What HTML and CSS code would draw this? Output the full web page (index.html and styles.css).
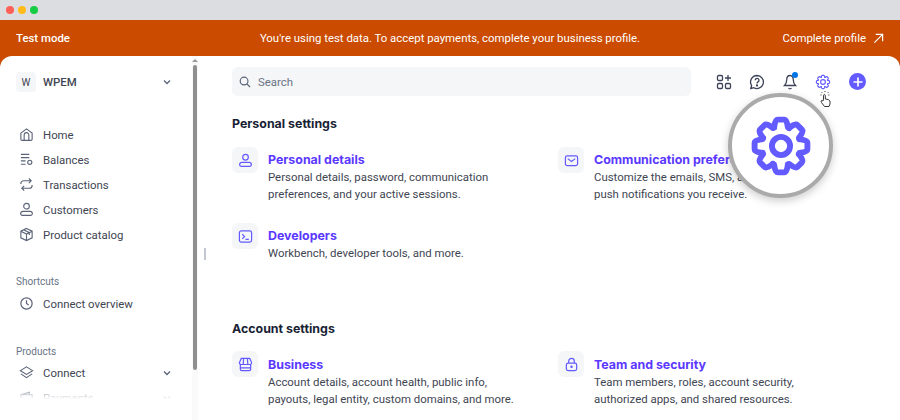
FILE: index.html
```html
<!DOCTYPE html>
<html>
<head>
<title>Settings - WPEM</title>
<link rel="stylesheet" href="styles.css">
</head>
<body>
<div class="chrome">
	<span class="dot red"></span><span class="dot yellow"></span><span class="dot green"></span>
</div>
<div class="banner">
	<b class="mode">Test mode</b>
	<span class="notice">You're using test data. To accept payments, complete your business profile.</span>
	<span class="complete">Complete profile
		<svg width="11" height="11" viewBox="0 0 12 12" fill="none" stroke="#fff" stroke-width="1.300"><path d="M1.500 10.500 10.500 1.500M3 1.500h7.500V9"/></svg>
	</span>
</div>
<div class="panel">
	<div class="sidebar">
		<div class="account">
			<span class="badge">W</span>
			<b class="account-name">WPEM</b>
			<svg class="chev" width="10" height="10" viewBox="0 0 10 10" fill="none" stroke="#5b6478" stroke-width="1.300"><path d="M2 3.500 5 6.500 8 3.500"/></svg>
		</div>
		<div class="nav">
			<div class="nav-item">
				<svg width="15" height="15" viewBox="0 0 16 16" fill="none" stroke="#5b6478" stroke-width="1.200"><path d="M2 6.500 8 2l6 4.500V13a1.300 1.300 0 0 1-1.300 1.300H3.300A1.300 1.300 0 0 1 2 13z"/><path d="M5.500 14V8.500a2.500 2.500 0 0 1 5 0V14"/></svg>
				Home</div>
			<div class="nav-item">
				<svg width="15" height="15" viewBox="0 0 16 16" fill="none" stroke="#5b6478" stroke-width="1.200"><path d="M2 2.500h9M2 6h9M2 9.500h5M2 13h5"/><circle cx="11.500" cy="11" r="2.200"/></svg>
				Balances</div>
			<div class="nav-item">
				<svg width="15" height="15" viewBox="0 0 16 16" fill="none" stroke="#5b6478" stroke-width="1.200"><path d="M10.500 1.500 13 4l-2.500 2.500M13 4H5a3 3 0 0 0-3 3v.500M5.500 14.500 3 12l2.500-2.500M3 12h8a3 3 0 0 0 3-3v-.500"/></svg>
				Transactions</div>
			<div class="nav-item">
				<svg width="15" height="15" viewBox="0 0 16 16" fill="none" stroke="#5b6478" stroke-width="1.200"><circle cx="8" cy="4.500" r="3"/><path d="M4 10h8a2.200 2.200 0 0 1 2.200 2.200v.300a1.800 1.800 0 0 1-1.800 1.800H3.600a1.800 1.800 0 0 1-1.800-1.800v-.300A2.200 2.200 0 0 1 4 10z"/></svg>
				Customers</div>
			<div class="nav-item">
				<svg width="15" height="15" viewBox="0 0 16 16" fill="none" stroke="#5b6478" stroke-width="1.200"><path d="M8 1.500 14 4.500v7l-6 3-6-3v-7zM2 4.500l6 3 6-3M8 7.500v7M5 3l6 3v2.500"/></svg>
				Product catalog</div>
		</div>
		<div class="nav-title shortcuts">Shortcuts</div>
		<div class="nav-item">
			<svg width="15" height="15" viewBox="0 0 16 16" fill="none" stroke="#5b6478" stroke-width="1.300"><circle cx="8" cy="8" r="6"/><path d="M8 4.500V8l2.300 1.500"/></svg>
			Connect overview</div>
		<div class="nav-title products">Products</div>
		<div class="nav-item">
			<svg width="15" height="15" viewBox="0 0 16 16" fill="none" stroke="#5b6478" stroke-width="1.200"><path d="M8 2 14.500 6 8 10 1.500 6z"/><path d="M2 9.500 8 13.500l6-4"/></svg>
			Connect
			<svg class="chev" width="10" height="10" viewBox="0 0 10 10" fill="none" stroke="#5b6478" stroke-width="1.300"><path d="M2 3.500 5 6.500 8 3.500"/></svg>
		</div>
		<div class="nav-item">
			<svg width="15" height="15" viewBox="0 0 16 16" fill="none" stroke="#5b6478" stroke-width="1.200"><path d="M2 5 11 2.500V5M2 5h12v8H2z"/></svg>
			Payments
			<svg class="chev" width="10" height="10" viewBox="0 0 10 10" fill="none" stroke="#5b6478" stroke-width="1.300"><path d="M2 3.500 5 6.500 8 3.500"/></svg>
		</div>
		<div class="fade"></div>
		<div class="scroll"><span class="scroll-up"></span><span class="thumb"></span></div>
	</div>
	<span class="handle"></span>
	<div class="main">
		<div class="topbar">
			<div class="search">
				<svg width="12" height="12" viewBox="0 0 13 13" fill="none" stroke="#5b6478" stroke-width="1.300"><circle cx="5.500" cy="5.500" r="4.200"/><path d="M8.700 8.700 12 12"/></svg>
				Search
			</div>
			<div class="tools">
				<svg width="16" height="16" viewBox="0 0 16 16" fill="none" stroke="#3c4257" stroke-width="1.300"><rect x="1.500" y="1.500" width="5" height="5" rx="1.200"/><rect x="1.500" y="9.500" width="5" height="5" rx="1.200"/><rect x="9.500" y="9.500" width="5" height="5" rx="1.200"/><path d="M12 1v6M9 4h6"/></svg>
				<svg width="16" height="16" viewBox="0 0 16 16" fill="none" stroke="#3c4257" stroke-width="1.300"><path d="M8 1.500a6.500 6.500 0 1 1-3.200 12.200L1.800 14.500l.8-3A6.500 6.500 0 0 1 8 1.500z"/><path d="M6.200 6.200a1.900 1.900 0 1 1 2.800 1.700c-.7.400-1 .8-1 1.500"/><circle cx="8" cy="11.500" r=".5"/></svg>
				<span class="bell">
					<svg width="16" height="16" viewBox="0 0 16 16" fill="none" stroke="#3c4257" stroke-width="1.300"><path d="M8 1.500c-2.200 0-3.300 2-3.300 4.500 0 3-1.200 4.500-2.200 5.500h11c-1-1-2.200-2.500-2.200-5.500 0-2.500-1.100-4.500-3.300-4.500zM6.500 14a1.800 1.800 0 0 0 3 0"/></svg>
					<span class="bell-dot"></span>
				</span>
				<svg width="16" height="16" viewBox="-12 -12 24 24" fill="none" stroke="#635bff" stroke-width="1.700" stroke-linejoin="round" stroke-linecap="round">
					<defs><path id="tooth" d="M-2.600-6.900C-2.400-8-2.300-9.900-1.200-9.900H1.200C2.300-9.900 2.400-8 2.600-6.900L3.050-6.710"/></defs>
					<use href="#tooth"/><use href="#tooth" transform="rotate(45)"/><use href="#tooth" transform="rotate(90)"/><use href="#tooth" transform="rotate(135)"/><use href="#tooth" transform="rotate(180)"/><use href="#tooth" transform="rotate(225)"/><use href="#tooth" transform="rotate(270)"/><use href="#tooth" transform="rotate(315)"/>
					<circle r="3.600"/>
				</svg>
				<span class="plus">
					<svg width="10" height="10" viewBox="0 0 10 10" stroke="#fff" stroke-width="1.700"><path d="M5 .5v9M.5 5h9"/></svg>
				</span>
			</div>
		</div>
		<div class="section">
			<h2 class="section-title">Personal settings</h2>
			<div class="cards">
				<div class="card">
					<span class="card-icon"><svg width="15" height="15" viewBox="0 0 16 16" fill="none" stroke="#635bff" stroke-width="1.300"><circle cx="8" cy="4.500" r="3"/><path d="M4 10h8a2.200 2.200 0 0 1 2.200 2.200v.300a1.800 1.800 0 0 1-1.800 1.800H3.600a1.800 1.800 0 0 1-1.800-1.800v-.300A2.200 2.200 0 0 1 4 10z"/></svg></span>
					<div class="card-body"><a class="card-title">Personal details</a><p class="card-text">Personal details, password, communication<br>preferences, and your active sessions.</p></div>
				</div>
				<div class="card">
					<span class="card-icon"><svg width="15" height="15" viewBox="0 0 16 16" fill="none" stroke="#635bff" stroke-width="1.300"><rect x="1.500" y="3" width="13" height="10.500" rx="2"/><path d="M4 6l4 3 4-3"/></svg></span>
					<div class="card-body"><a class="card-title">Communication preferences</a><p class="card-text">Customize the emails, SMS, and<br>push notifications you receive.</p></div>
				</div>
				<div class="card">
					<span class="card-icon"><svg width="15" height="15" viewBox="0 0 16 16" fill="none" stroke="#635bff" stroke-width="1.300"><rect x="1.500" y="2" width="13" height="12" rx="2"/><path d="M4.500 5.500 7 8l-2.500 2.500M8 11h3.500"/></svg></span>
					<div class="card-body"><a class="card-title">Developers</a><p class="card-text">Workbench, developer tools, and more.</p></div>
				</div>
			</div>
		</div>
		<div class="section account-settings">
			<h2 class="section-title">Account settings</h2>
			<div class="cards">
				<div class="card">
					<span class="card-icon"><svg width="15" height="15" viewBox="0 0 16 16" fill="none" stroke="#635bff" stroke-width="1.300"><path d="M3.500 1.500h9L14.500 6a2 2 0 0 1-2 2h-9a2 2 0 0 1-2-2zM6 1.500 5.500 8M10 1.500l.5 6.500M2.500 8v5a1.500 1.500 0 0 0 1.500 1.500h8a1.500 1.500 0 0 0 1.500-1.500V8M2.500 11.500h11"/></svg></span>
					<div class="card-body"><a class="card-title">Business</a><p class="card-text">Account details, account health, public info,<br>payouts, legal entity, custom domains, and more.</p></div>
				</div>
				<div class="card">
					<span class="card-icon"><svg width="15" height="15" viewBox="0 0 16 16" fill="none" stroke="#635bff" stroke-width="1.300"><rect x="2.500" y="6.500" width="11" height="8" rx="2"/><path d="M5 6.500V4.500a3 3 0 0 1 6 0v2"/><circle cx="8" cy="10.500" r=".7"/></svg></span>
					<div class="card-body"><a class="card-title">Team and security</a><p class="card-text">Team members, roles, account security,<br>authorized apps, and shared resources.</p></div>
				</div>
			</div>
		</div>
	</div>
</div>
<!-- zoom callout over the gear -->
<svg class="pointer" width="14" height="17" viewBox="0 0 14 17" fill="#fff" stroke="#222" stroke-width=".9"><path d="M7 1v1.500M3.500 2l1 1.300M10.500 2l-1 1.300M2.500 5h1.300M10.300 5h1.300" stroke-dasharray="1 .6"/><path d="M5.500 9V5.500a.9.9 0 0 1 1.800 0V9l3 .5 1.700 1.500V14l-1 2.500H6.500L3.500 12.500 3 11c.5-.6 1.300-.5 2 0z"/></svg>
<div class="lens">
	<svg width="64" height="64" viewBox="-12 -12 24 24" fill="none" stroke="#635bff" stroke-width="2.200" stroke-linejoin="round" stroke-linecap="round">
		<use href="#tooth"/><use href="#tooth" transform="rotate(45)"/><use href="#tooth" transform="rotate(90)"/><use href="#tooth" transform="rotate(135)"/><use href="#tooth" transform="rotate(180)"/><use href="#tooth" transform="rotate(225)"/><use href="#tooth" transform="rotate(270)"/><use href="#tooth" transform="rotate(315)"/>
		<circle r="3.400"/>
	</svg>
</div>
</body>
</html>
```

FILE: styles.css
```css
* {
	box-sizing: border-box;
}

body {
	margin: 0;
	width: 900px;
	height: 420px;
	overflow: hidden;
	position: relative;
	background-color: #cb4b00;
	font-family: "Roboto", "Liberation Sans", sans-serif;
	font-size: 11.4px;
	color: #414552;
}

.chrome {
	height: 20px;
	background-color: #dcdde0;
	display: flex;
	align-items: center;
	gap: 4px;
	padding-left: 6px;
}

.dot {
	width: 8px;
	height: 8px;
	border-radius: 50%;
}

.red { background-color: #ff5f57; }
.yellow { background-color: #febc1a; }
.green { background-color: #16cc44; }

.banner {
	height: 36px;
	display: grid;
	grid-template-columns: 1fr auto 1fr;
	align-items: center;
	padding: 0 16px;
	color: #fff;
}

.mode {
	font-weight: 500;
}

.complete {
	display: flex;
	align-items: center;
	justify-content: flex-end;
	gap: 7px;
}

.panel {
	height: 364px;
	background-color: #fff;
	border-radius: 12px 12px 0 0;
	display: flex;
	overflow: hidden;
}

.sidebar {
	width: 198px;
	flex-shrink: 0;
	padding: 16px 0 0 16px;
	position: relative;
}

.account {
	height: 20px;
	display: flex;
	align-items: center;
	gap: 7px;
	width: 156px;
}

.badge {
	width: 20px;
	height: 20px;
	border-radius: 4px;
	background-color: #f5f6f8;
	display: flex;
	align-items: center;
	justify-content: center;
	font-size: 10px;
}

.account-name {
	font-weight: 500;
}

.chev {
	margin-left: auto;
}

.nav {
	margin-top: 30px;
}

.nav-item {
	height: 25px;
	width: 156px;
	padding-left: 3px;
	display: flex;
	align-items: center;
	gap: 9px;
}

.nav-title {
	font-size: 10px;
	color: #687385;
	height: 16px;
	line-height: 16px;
}

.shortcuts {
	margin-top: 27px;
	margin-bottom: 1px;
}

.products {
	margin-top: 28px;
	margin-bottom: 0;
}

.fade {
	position: absolute;
	left: 0;
	right: 6px;
	bottom: 0;
	height: 36px;
	background: linear-gradient(rgba(255,255,255,0), #fff 42%);
}

.scroll {
	position: absolute;
	top: 0;
	right: 0;
	bottom: 0;
	width: 6px;
	background-color: #fafafa;
}

.scroll-up {
	display: block;
	width: 0;
	margin: 3px auto 0;
	border: 3px solid transparent;
	border-top: 0;
	border-bottom: 3px solid #999;
}

.thumb {
	display: block;
	margin-top: 3px;
	width: 4px;
	height: 305px;
	margin-left: 1px;
	border-radius: 2px;
	background-color: #8f8f8f;
}

.handle {
	position: absolute;
	left: 204px;
	top: 248px;
	width: 2px;
	height: 12px;
	background-color: #c4c8d0;
}

.main {
	flex: 1;
	padding: 11px 0 0 34px;
}

.topbar {
	display: flex;
	align-items: center;
	height: 29px;
}

.search {
	width: 459px;
	height: 29px;
	border-radius: 6px;
	background-color: #f5f6f8;
	display: flex;
	align-items: center;
	gap: 7px;
	padding-left: 7px;
	color: #687385;
}

.tools {
	display: flex;
	align-items: center;
	gap: 17px;
	margin-left: 25px;
}

.bell {
	position: relative;
	display: flex;
}

.bell-dot {
	position: absolute;
	top: -2px;
	right: 0;
	width: 6px;
	height: 6px;
	border-radius: 50%;
	background-color: #0073e6;
}

.plus {
	width: 17px;
	height: 17px;
	border-radius: 50%;
	background-color: #635bff;
	display: flex;
	align-items: center;
	justify-content: center;
	margin-left: 1px;
}

.section {
	margin-top: 20px;
}

.account-settings {
	margin-top: 22px;
}

.section-title {
	margin: 0 0 15px;
	font-family: "Inter", sans-serif;
	font-size: 12.4px;
	line-height: 16px;
	font-weight: 700;
	color: #1a1f36;
}

.account-settings .section-title {
	margin-bottom: 14px;
}

.cards {
	display: grid;
	grid-template-columns: 326px 326px;
	grid-auto-rows: 76px;
}

.card {
	display: flex;
	gap: 10px;
}

.card-icon {
	width: 26px;
	height: 26px;
	flex-shrink: 0;
	border-radius: 6px;
	background-color: #f5f6f8;
	display: flex;
	align-items: center;
	justify-content: center;
}

.card-body {
	padding-top: 4px;
}

.account-settings .card-body {
	padding-top: 5px;
}

.card-title {
	display: block;
	font-family: "Inter", sans-serif;
	font-size: 12.4px;
	line-height: 18px;
	font-weight: 700;
	color: #5b38ff;
}

.card-text {
	margin: 0;
	line-height: 17px;
	white-space: nowrap;
}

.pointer {
	position: absolute;
	left: 818px;
	top: 90px;
}

.lens {
	position: absolute;
	left: 728px;
	top: 93px;
	width: 105px;
	height: 105px;
	border-radius: 50%;
	background-color: #fff;
	border: 4px solid #aaa;
	box-shadow: 0 3px 8px rgba(0,0,0,0.2);
	display: flex;
	align-items: center;
	justify-content: center;
}
```
